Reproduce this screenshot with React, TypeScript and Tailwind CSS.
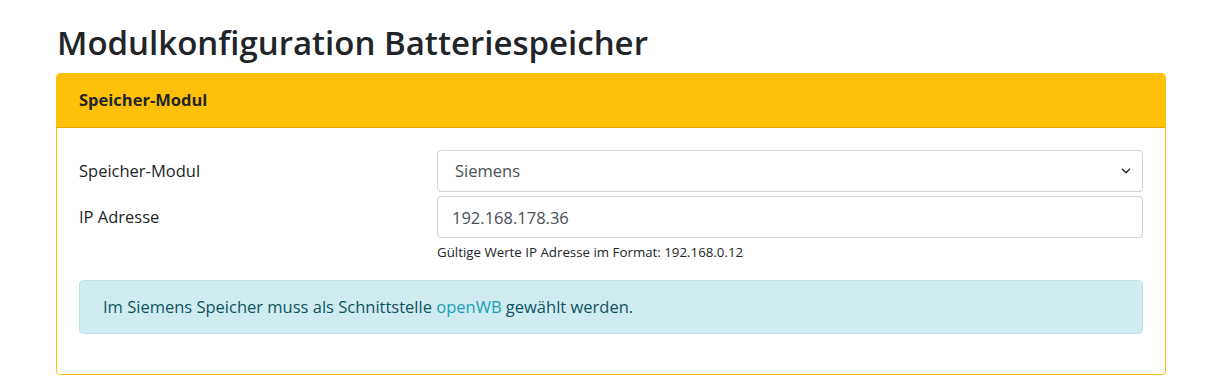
import { ChevronDown } from "lucide-react";

const font = { fontFamily: '"Open Sans", "Noto Sans", sans-serif' };

export default function App() {
  return (
    <div className="min-h-[391px] bg-white text-[#212529]" style={font}>
      <div className="pl-[56px] pr-[53px] pt-[24px]">
        <h1 className="text-[33px] leading-[38px] font-semibold mb-[11px] pl-[1px]">
          Modulkonfiguration Batteriespeicher
        </h1>

        {/* Karte Speicher-Modul */}
        <div className="border border-[#ffc107] rounded-[4px] overflow-hidden">
          <div className="bg-[#ffc107] border-b border-[#e0aa06] h-[54px] flex items-center px-[22px]">
            <span className="text-[16.5px] font-bold">Speicher-Modul</span>
          </div>

          <div className="px-[22px] pt-[22px] pb-[40px]">
            <div className="flex items-center mb-[4px]">
              <label className="w-[358px] text-[16.5px]">Speicher-Modul</label>
              <div className="relative flex-1">
                <select className="w-full h-[42px] appearance-none border border-[#ced4da] rounded-[4px] pl-[17px] text-[16.5px] text-[#495057] bg-white outline-none">
                  <option>Siemens</option>
                </select>
                <ChevronDown
                  size={14}
                  strokeWidth={3}
                  className="absolute right-[10px] top-[14px] text-[#343a40] pointer-events-none"
                />
              </div>
            </div>

            <div className="flex items-start">
              <label className="w-[358px] text-[16.5px] pt-[9px]">IP Adresse</label>
              <div className="flex-1">
                <input
                  defaultValue="192.168.178.36"
                  className="w-full h-[42px] border border-[#ced4da] rounded-[4px] px-[14px] text-[16.5px] text-[#495057] outline-none"
                />
                <p className="text-[13.3px] mt-[5px] text-[#212529]">
                  Gültige Werte IP Adresse im Format: 192.168.0.12
                </p>
              </div>
            </div>

            <div className="mt-[17px] bg-[#d1ecf1] border border-[#bee5eb] rounded-[4px] h-[54px] flex items-center px-[23px] text-[16.5px] text-[#0c5460]">
              <span>
                Im Siemens Speicher muss als Schnittstelle{" "}
                <a className="text-[#17a2b8]">openWB</a> gewählt werden.
              </span>
            </div>
          </div>
        </div>
      </div>
    </div>
  );
}
